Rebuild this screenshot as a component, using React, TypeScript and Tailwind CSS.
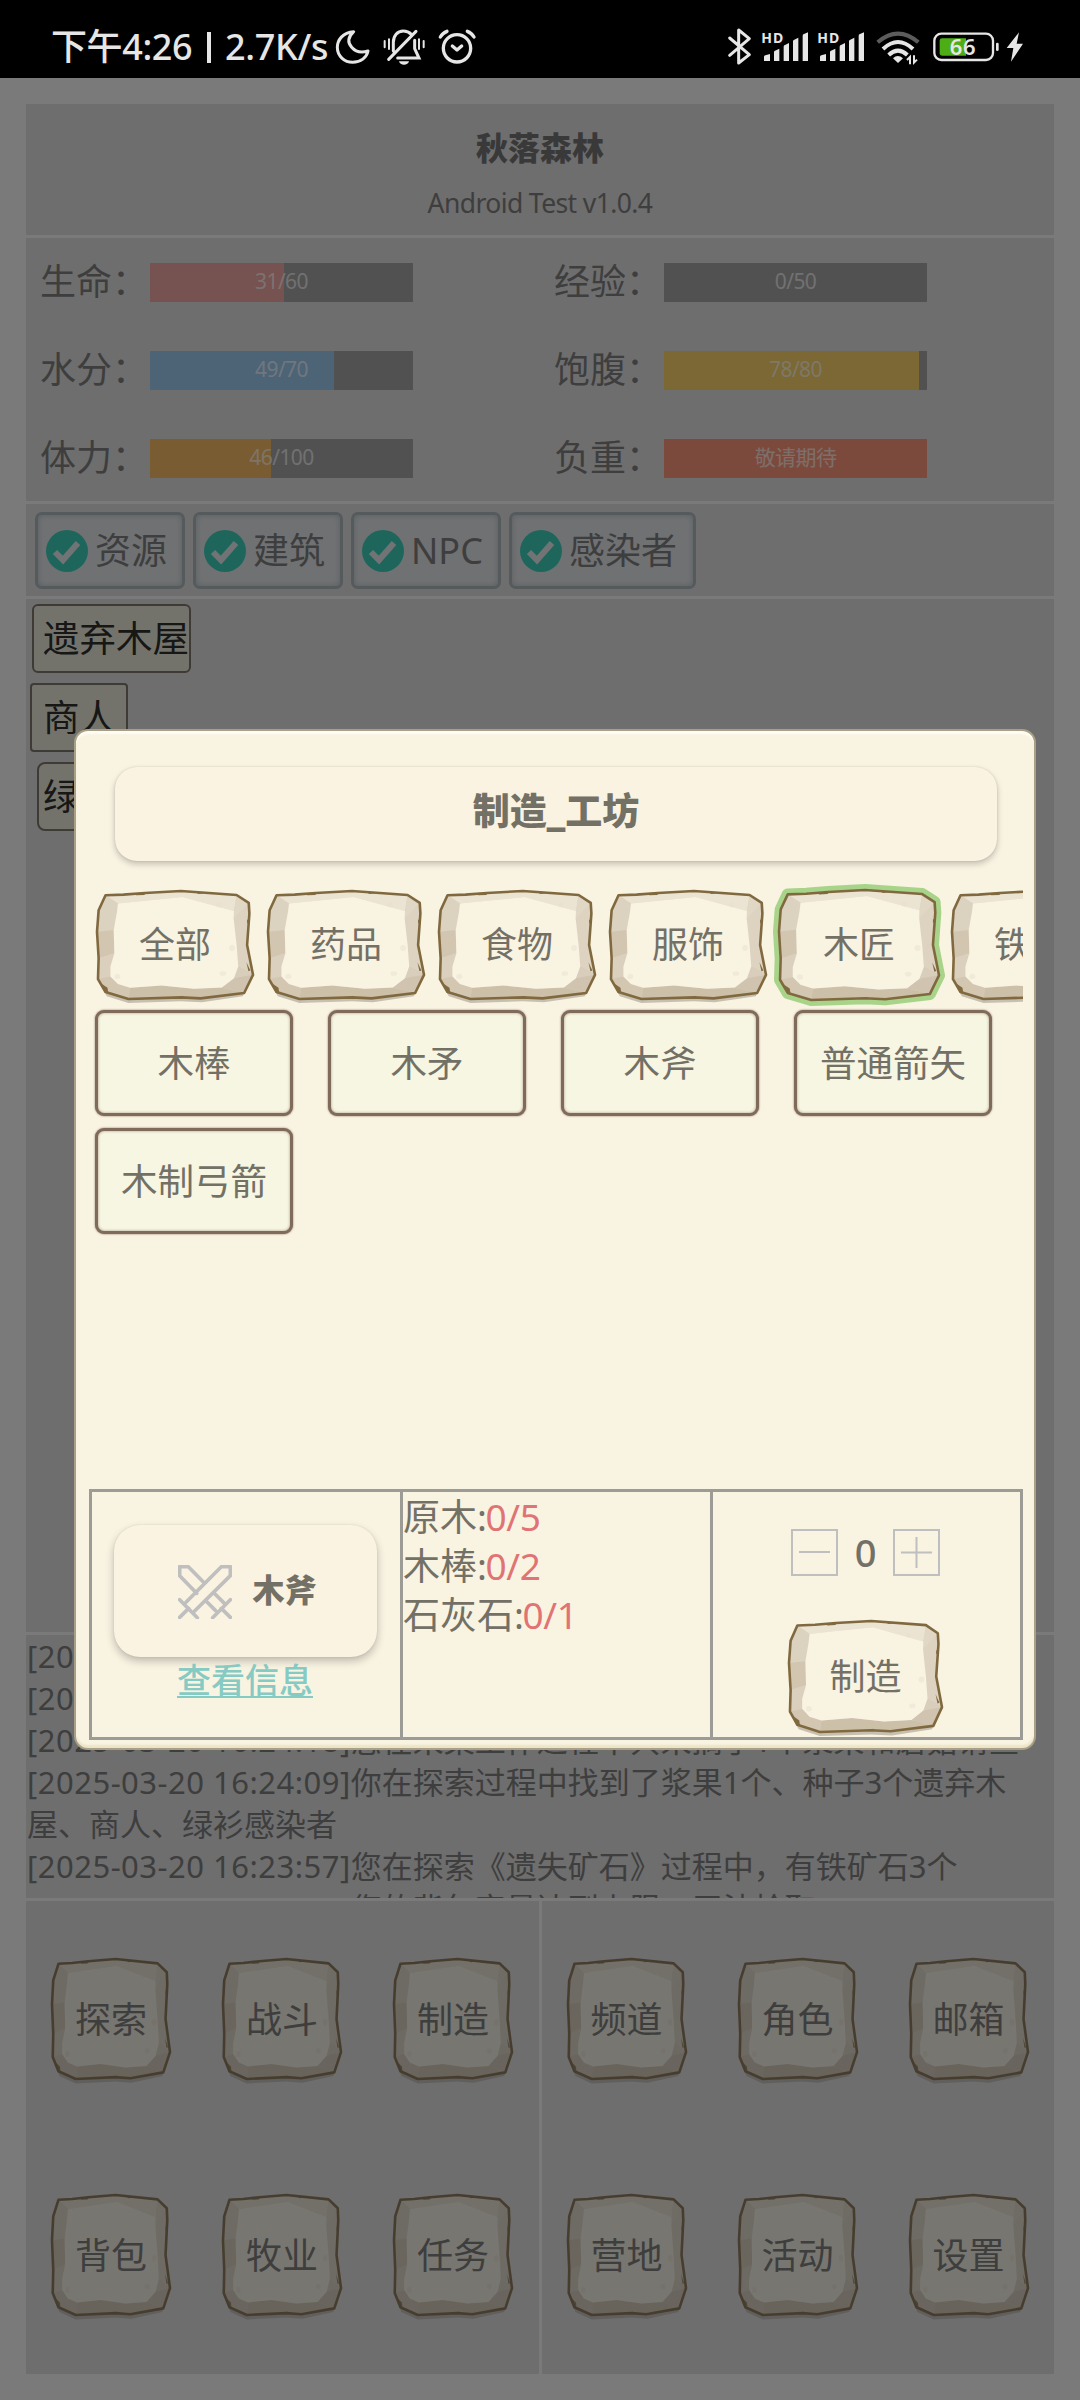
import type { ReactNode } from "react";

const stats = [
  { label: "生命", text: "31/60", rate: 51, color: "bg-[#eda5a3]" },
  { label: "经验", text: "0/50", rate: 0, color: "bg-[#a3a3a3]" },
  { label: "水分", text: "49/70", rate: 70, color: "bg-[#9bc8ef]" },
  { label: "饱腹", text: "78/80", rate: 97, color: "bg-[#f6d068]" },
  { label: "体力", text: "46/100", rate: 46, color: "bg-[#f4b864]" },
  { label: "负重", text: "敬请期待", rate: 100, color: "bg-[#f89478]" },
];

const filters = [
  { name: "资源", width: "w-[150px]" },
  { name: "建筑", width: "w-[150px]" },
  { name: "NPC", width: "w-[150px]" },
  { name: "感染者", width: "w-[187px]" },
];

const logs = [
  { time: "[2025-03-20 16:24:31]", text: "您的背包容量达到上限，无法拾取!" },
  { time: "[2025-03-20 16:24:25]", text: "您的背包容量达到上限，无法拾取!" },
  { time: "[2025-03-20 16:24:18]", text: "您在采集工作过程中共采摘了1个浆果和蘑菇请查" },
  { time: "[2025-03-20 16:24:09]", text: "你在探索过程中找到了浆果1个、种子3个遗弃木屋、商人、绿衫感染者" },
  { time: "[2025-03-20 16:23:57]", text: "您在探索《遗失矿石》过程中，有铁矿石3个" },
  { time: "[2025-03-20 16:23:51]", text: "您的背包容量达到上限，无法拾取!" },
];

const menus = [
  ["探索", "战斗", "制造", "背包", "牧业", "任务"],
  ["频道", "角色", "邮箱", "营地", "活动", "设置"],
];

const tabs = ["全部", "药品", "食物", "服饰", "木匠", "铁匠"];
const recipes = ["木棒", "木矛", "木斧", "普通箭矢", "木制弓箭"];
const materials = [
  { name: "原木", count: "0/5" },
  { name: "木棒", count: "0/2" },
  { name: "石灰石", count: "0/1" },
];

const edge =
  "26,13 81,11 146,6 256,0 426,12 463,36 465,68 458,163 476,253 449,308 316,324 256,321 96,326 26,305 3,266 5,203 0,123 5,58";
const face =
  "64,38 131,31 261,18 418,60 417,83 426,163 431,228 418,263 381,291 296,295 196,285 101,292 64,281 41,258 41,228 53,188 51,118 61,63";

const Stone = ({
  children,
  className = "",
  active = false,
  muted = false,
}: {
  children: ReactNode;
  className?: string;
  active?: boolean;
  muted?: boolean;
}) => {
  return (
    <button
      className={`relative flex shrink-0 items-center justify-center text-[36px] leading-none ${className}`}
    >
      <svg
        viewBox="0 0 476 326"
        preserveAspectRatio="none"
        className={`absolute inset-0 h-full w-full overflow-visible ${
          muted ? "opacity-70" : ""
        }`}
      >
        {!active && (
          <polygon
            points="20,300 30,318 96,338 256,333 320,336 445,318 452,300"
            fill="#7d7468"
            opacity="0.4"
          />
        )}
        {active && (
          <polygon
            points={edge}
            fill="#a8d48a"
            stroke="#a8d48a"
            strokeWidth="12"
            strokeLinejoin="round"
            vectorEffect="non-scaling-stroke"
          />
        )}
        <polygon points={edge} fill="#ddd3c0" />
        <polygon points="26,13 256,0 426,12 418,60 261,18 131,31 64,38" fill="#ebe4d3" />
        <polygon points="26,13 64,38 61,63 51,118 0,123 5,58" fill="#dcd2c0" />
        <polygon points="0,123 51,118 53,188 5,203" fill="#d2c6b1" />
        <polygon points="5,203 53,188 41,228 41,258 3,266" fill="#dad0bd" />
        <polygon points="3,266 41,258 64,281 101,292 96,326 26,305" fill="#d3c7b2" />
        <polygon points="96,326 101,292 196,285 296,295 381,291 449,308 316,324 256,321" fill="#cdc0a9" />
        <polygon points="381,291 418,263 431,228 476,253 449,308" fill="#d0c3af" />
        <polygon points="418,263 431,228 476,253" fill="#d9cebb" />
        <polygon points="426,12 463,36 417,83 418,60" fill="#e0d7c5" />
        <polygon points={face} fill="#f9f3e2" />
        <g fill="#e9e0cc" opacity="0.45">
          <ellipse cx="412" cy="172" rx="9" ry="9" />
          <ellipse cx="384" cy="249" rx="10" ry="7" />
          <ellipse cx="62" cy="258" rx="9" ry="8" />
          <ellipse cx="372" cy="42" rx="8" ry="7" />
        </g>
        <g fill="#80693f">
          <polygon points="110,9 150,6 144,12 120,13" />
          <polygon points="300,4 330,6 310,9" />
          <polygon points="456,215 468,240 462,242" />
          <polygon points="14,280 32,292 34,306 26,304" />
          <polygon points="458,85 465,92 458,98" />
          <polygon points="255,322 262,316 264,323" />
        </g>
        <polygon
          points={edge}
          fill="none"
          stroke={muted ? "#6b532b" : "#80693f"}
          strokeWidth="2.6"
          strokeLinejoin="round"
          vectorEffect="non-scaling-stroke"
        />
      </svg>
      <span className="relative pt-[1px]">{children}</span>
    </button>
  );
};

const Signal = () => (
  <svg viewBox="150 35 168 120" className="h-10 w-14" fill="#e6e6e6">
    <text x="154" y="83" fontSize="42" fontWeight="700" textLength="66" fontFamily="Noto Sans">
      HD
    </text>
    <path d="M162 137v-13q0-3 4-4l14-4v21zM192 137v-27q0-3 3-4l13-6v37zM221 137v-43q0-4 4-5l12-6v54zM249 137V78q0-4 4-5l12-6v70zM278 137V61q0-4 4-5l12-5v86z" />
  </svg>
);

const StatusBar = () => {
  return (
    <div className="flex h-[78px] items-center justify-between bg-black pt-[16px] pr-[55px] text-[#e6e6e6]">
      <div className="flex h-10 items-center">
        <div className="flex w-[335px] items-center pl-[51px] text-[36px] leading-10 font-medium whitespace-nowrap">
          <span className="w-[156px] tracking-[-0.4px]">下午4:26</span>
          <span className="mr-[14px] h-[31px] w-1 bg-[#e6e6e6]" />
          <span className="tracking-[-0.3px]">2.7K/s</span>
        </div>
        <svg viewBox="885 50 135 120" className="h-10 w-[45px]" fill="none" stroke="currentColor" strokeWidth="9" strokeLinejoin="round">
          <path d="M941 64C908 66 892 90 892 111c0 26 21 45 46 45 24 0 42-14 46-34-19 6-38 2-49-11-13-15-10-32 6-47z" />
        </svg>
        <svg viewBox="1020 50 165 120" className="h-10 w-[55px]" fill="none" stroke="currentColor" strokeWidth="9" strokeLinecap="round">
          <path d="M1060 122V96c0-20 12-34 30-34 10 0 18 4 24 10M1046 147l82-84M1124 90v25l13 28h-64" />
          <path d="M1034 92v19M1047 87v29M1137 87v29M1151 92v19" strokeWidth="6" />
          <path d="M1077 153h30c-2 14-28 14-30 0z" fill="currentColor" stroke="none" />
        </svg>
        <svg viewBox="1185 50 135 120" className="h-10 w-[45px]" fill="none" stroke="currentColor" strokeWidth="10" strokeLinecap="round">
          <circle cx="1251" cy="114" r="41" />
          <path d="M1237 107l14 12 14-12M1201 80q7-12 20-17M1302 80q-7-12-20-17" strokeLinejoin="round" />
        </svg>
      </div>
      <div className="flex h-10 items-center">
        <svg viewBox="48 35 102 120" className="h-10 w-[34px]" fill="none" stroke="currentColor" strokeWidth="9" strokeLinecap="round" strokeLinejoin="round">
          <path d="M59 68l59 50-32 25V44l32 26-59 50" />
        </svg>
        <Signal />
        <Signal />
        <svg viewBox="486 35 180 120" className="h-10 w-[60px]" fill="none" stroke="currentColor" strokeWidth="12">
          <path d="M503 81q61-52 122 0" stroke="#5c5c5c" />
          <path d="M519 101q45-42 90 0" />
          <path d="M536 119q28-26 56 0" />
          <path d="M549 129q14-14 30 0l-15 14z" fill="currentColor" stroke="none" />
          <path d="M600 147v-22l-9 9M612 120v22l9-9" strokeWidth="6" />
        </svg>
        <svg viewBox="666 35 210 120" className="h-10 w-[70px]">
          <rect x="673" y="55" width="176" height="79" rx="21" fill="none" stroke="#e6e6e6" strokeWidth="7" />
          <path d="M696 69h72v52h-72q-7 0-7-7V76q0-7 7-7z" fill="#4cae14" />
          <text x="758" y="118" fontSize="66" fontWeight="600" textAnchor="middle" textLength="78" fill="#e6e6e6" fontFamily="Noto Sans">
            66
          </text>
          <rect x="858" y="82" width="8" height="25" rx="4" fill="#e6e6e6" />
        </svg>
        <svg viewBox="876 35 69 120" className="h-10 w-[23px]" fill="#e6e6e6">
          <path d="M927 51l-37 47h20l-7 41 36-54h-19z" />
        </svg>
      </div>
    </div>
  );
};

const CraftDialog = () => {
  return (
    <section className="flex h-[1021px] w-[962px] flex-col rounded-[14px] border-2 border-[#a89f86] bg-[#f9f3e2] text-[#737066] shadow-[inset_0_3px_2px_#fffdf4,inset_0_-3px_2px_#ece4c6]">
      <h2 className="mt-[36px] ml-[39px] flex h-[94px] w-[882px] items-center justify-center rounded-[22px] bg-[#faf3e1] pb-[6px] text-[37px] font-black shadow-[0_3px_6px_rgba(0,0,0,0.22),0_0_2px_rgba(0,0,0,0.12)]">
        制造_工坊
      </h2>
      <div className="ml-[8px] flex h-[145px] w-[939px] gap-[15px] overflow-hidden pt-[30px] pl-[13px]">
        {tabs.map((tab) => (
          <Stone
            key={tab}
            active={tab === "木匠"}
            className={tab === "木匠" ? "-mx-[2px] -mt-[1px] h-[110px] w-[160px]" : "h-[108px] w-[156px]"}
          >
            {tab}
          </Stone>
        ))}
      </div>
      <div className="mt-[4px] ml-[19px] grid grid-cols-[repeat(4,198px)] gap-x-[35px] gap-y-[12px]">
        {recipes.map((recipe) => (
          <button
            key={recipe}
            className="h-[106px] rounded-[9px] border-3 border-[#806b5b] bg-[#f7f6e2] pt-[1px] text-[36.500px] whitespace-nowrap shadow-[0_0_2px_#806b5b,inset_0_0_3px_#a89a86]"
          >
            {recipe}
          </button>
        ))}
      </div>
      <div className="mt-auto mb-[8px] ml-[13px] flex h-[251px] w-[934px] border-3 border-[#9c9b96]">
        <div className="flex w-[311px] flex-col items-center border-r-3 border-[#9c9b96] pr-[2px]">
          <div className="mt-[33px] flex h-[132px] w-[263px] items-center rounded-[26px] bg-[#faf3e1] pb-[2px] pl-[64px] shadow-[0_4px_8px_rgba(0,0,0,0.24),0_0_2px_rgba(0,0,0,0.1)]">
            <svg viewBox="0 0 162 162" className="mt-[4px] size-[54px]" fill="none" stroke="#bfbfbf" strokeWidth="11" strokeLinecap="round" strokeLinejoin="round">
              <path d="M24 112L130 5h27v27L50 138M5 104l53 54M5 157l27-27" />
              <path d="M79 54L31 5H5v27l51 53M108 84l29 29M84 108l28 28M157 104l-53 54M157 157l-27-27" />
            </svg>
            <span className="ml-[21px] text-[32px] leading-none font-black">木斧</span>
          </div>
          <a className="mt-[3px] text-[34px] leading-[40px] font-medium text-[#85cac3] underline decoration-2 underline-offset-[3px]">
            查看信息
          </a>
        </div>
        <ul className="w-[310px] border-r-3 border-[#9c9b96] text-[37px] leading-[49px]">
          {materials.map((material) => (
            <li key={material.name}>
              {material.name}
              <span className="tracking-[-1.5px]">:</span>
              <span className="tracking-[-0.3px] text-[#e07373]">{material.count}</span>
            </li>
          ))}
        </ul>
        <div className="flex flex-1 flex-col items-center pr-[2px]">
          <div className="mt-[37px] flex h-[47px] items-center">
            <button className="flex h-[47px] w-[47px] items-center justify-center border-2 border-[#bfbfbf]">
              <span className="h-[2px] w-[31px] bg-[#bfbfbf]" />
            </button>
            <span className="w-[55px] text-center text-[38px] leading-none font-medium">0</span>
            <button className="flex h-[47px] w-[47px] items-center justify-center border-2 border-[#bfbfbf]">
              <svg viewBox="0 0 31 31" className="size-[31px]" stroke="#bfbfbf" strokeWidth="2">
                <path d="M0 15.5h31M15.5 0v31" />
              </svg>
            </button>
          </div>
          <Stone className="mt-[45px] h-[111px] w-[153px]">制造</Stone>
        </div>
      </div>
    </section>
  );
};

const App = () => {
  return (
    <div className="h-[2400px] w-[1080px] overflow-hidden bg-[#f5f5f5] font-['Noto_Sans','Noto_Sans_CJK_SC',sans-serif] text-[#7c7c7c]">
      <StatusBar />
      <div className="relative h-[2322px]">
        <main className="flex h-full flex-col gap-[3px] px-[26px] pt-[26px] pb-[26px]">
          <header className="flex h-[131px] flex-col items-center bg-[#dcdcdc] pt-[22px]">
            <h1 className="text-[32px] leading-[44px] font-black text-[#737373]">秋落森林</h1>
            <p className="mt-[13px] text-[26.500px] leading-[40px] tracking-[-0.6px]">Android Test v1.0.4</p>
          </header>

          <div className="grid h-[263px] grid-cols-2 content-start gap-y-[40px] bg-[#dcdcdc] pt-[20px]">
            {stats.map((stat) => (
              <div key={stat.label} className="flex h-[48px] items-center pl-[14px]">
                <span className="w-[110px] text-[36px] whitespace-nowrap">{stat.label}：</span>
                <div className="relative h-[39px] w-[263px] bg-[#a3a3a3]">
                  <div className={`h-full ${stat.color}`} style={{ width: `${stat.rate}%` }} />
                  <span className="absolute inset-0 flex items-center justify-center text-[21px] tracking-[-0.6px] text-white/70">
                    {stat.text}
                  </span>
                </div>
              </div>
            ))}
          </div>

          <div className="flex h-[92px] gap-[8px] bg-[#dcdcdc] pt-[8px] pl-[9px]">
            {filters.map((filter) => (
              <button
                key={filter.name}
                className={`flex h-[77px] items-center rounded-[7px] border-3 border-[#aab4b8] bg-[#e0e3e6] pl-[8px] text-[36px] shadow-[inset_0_0_6px_#b4bec4] ${filter.width}`}
              >
                <svg viewBox="0 0 42 42" className="mr-[7px] size-[42px] shrink-0">
                  <circle cx="21" cy="21" r="21" fill="#3dccb8" />
                  <path d="M9 22l8 8L32 13" fill="none" stroke="#e4e6e8" strokeWidth="6" />
                </svg>
                {filter.name}
              </button>
            ))}
          </div>

          <div className="flex h-[1033px] flex-col items-start gap-[10px] bg-[#dcdcdc] pt-[5px] text-[36.500px] text-[#2e2e2c]">
            <button className="ml-[6px] h-[69px] w-[159px] rounded-[6px] border-2 border-[#7d756c] bg-[#e6e6d9] pl-[9px] text-left whitespace-nowrap">
              遗弃木屋
            </button>
            <button className="ml-[4px] h-[69px] w-[98px] rounded-[4px] border-2 border-[#7d756c] bg-[#e6e6d9] pl-[11px] text-left whitespace-nowrap">
              商人
            </button>
            <button className="ml-[11px] h-[69px] w-[196px] rounded-[8px] border-2 border-[#7d756c] bg-[#e6e6d9] pl-[4px] text-left whitespace-nowrap">
              绿衫感染者
            </button>
          </div>

          <div className="h-[263px] overflow-hidden bg-[#dcdcdc] pl-[1px] text-[31px] leading-[42px] break-all">
            {logs.map((log) => (
              <p key={log.time}>
                <span className="tracking-[0.5px]">{log.time}</span>
                {log.text}
              </p>
            ))}
          </div>

          <nav className="flex flex-1 gap-[3px]">
            {menus.map((menu) => (
              <div
                key={menu[0]}
                className="grid flex-1 grid-cols-[repeat(3,118px)] content-start gap-x-[53px] gap-y-[116px] bg-[#dcdcdc] pt-[58px] pl-[26px]"
              >
                {menu.map((name) => (
                  <Stone key={name} muted className="h-[120px] w-[118px]">
                    {name}
                  </Stone>
                ))}
              </div>
            ))}
          </nav>
        </main>

        <div className="absolute inset-0 flex items-center bg-black/50 pl-[74px]">
          <CraftDialog />
        </div>
      </div>
    </div>
  );
};

export default App;
